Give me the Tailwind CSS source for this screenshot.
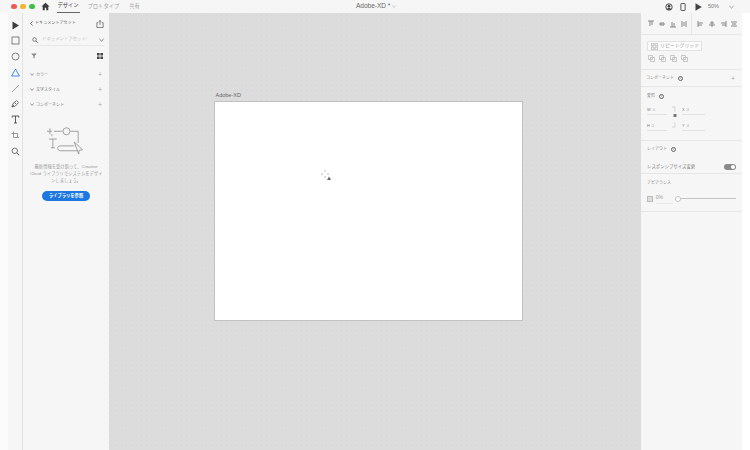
<!DOCTYPE html>
<html lang="ja">
<head>
  <meta charset="UTF-8" />
  <title>Adobe XD</title>
  <script src="https://cdn.jsdelivr.net/npm/@tailwindcss/browser@4"></script>
</head>
<body class="w-[750px] h-[450px] overflow-hidden whitespace-nowrap bg-white font-['Liberation_Sans','Noto_Sans_CJK_JP',sans-serif] text-[#7a7a7a]">
  <div class="flex flex-col w-[750px] h-[450px]">

    <!-- top bar -->
    <header class="relative flex items-center h-[13px] shrink-0 bg-[#f6f6f6]">
      <div class="flex items-center gap-[3.5px] ml-[11px]">
        <span class="w-[5.5px] h-[5.5px] rounded-full bg-[#ee5a52]"></span>
        <span class="w-[5.5px] h-[5.5px] rounded-full bg-[#f5b32f]"></span>
        <span class="w-[5.5px] h-[5.5px] rounded-full bg-[#3cc145]"></span>
      </div>
      <svg class="ml-[6px] w-[9px] h-[9px]" viewBox="0 0 10 10"><path d="M5 .8 .5 5h1.4v4.2h2.3V6.4h1.6v2.8h2.3V5h1.4z" fill="#3c3c3c"/></svg>
      <nav class="flex items-center h-full ml-[7px] text-[5.3px]">
        <span class="flex items-center h-full w-[23px] justify-center border-b border-[#666] text-[#444]">デザイン</span>
        <span class="ml-[8px] text-[#a0a0a0]">プロトタイプ</span>
        <span class="ml-[10px] text-[#a0a0a0]">共有</span>
      </nav>
      <div class="absolute left-[356px] top-[2px] flex items-center gap-[2px] text-[6.5px] leading-[8px] text-[#666]">
        Adobe-XD *
        <svg class="w-[4px] h-[3px]" viewBox="0 0 6 4"><path d="M.5 .8 3 3.2 5.5 .8" fill="none" stroke="#999" stroke-width=".8"/></svg>
      </div>
      <div class="ml-auto mr-[16px] flex items-center">
        <svg class="w-[8px] h-[8px]" viewBox="0 0 10 10"><circle cx="5" cy="5" r="4" fill="none" stroke="#444" stroke-width="1.2"/><circle cx="5" cy="4" r="1.7" fill="#444"/><path d="M2.3 8.5c.4-2 1.4-2.6 2.7-2.6s2.3.6 2.7 2.6z" fill="#444"/></svg>
        <svg class="ml-[7px] w-[6px] h-[8px]" viewBox="0 0 6 9"><rect x=".6" y=".6" width="4.8" height="7.8" rx=".6" fill="none" stroke="#444"/></svg>
        <svg class="ml-[9px] w-[7px] h-[8px]" viewBox="0 0 7 8"><path d="M.5 .3 6.8 4 .5 7.7z" fill="#444"/></svg>
        <span class="ml-[6px] w-[21px] text-[5.5px] text-[#777]">50%</span>
        <svg class="ml-[0px] w-[5px] h-[4px]" viewBox="0 0 6 4"><path d="M.5 .8 3 3.2 5.5 .8" fill="none" stroke="#777" stroke-width=".8"/></svg>
      </div>
    </header>

    <div class="flex flex-1 min-h-0">
      <div class="w-[8px] shrink-0 bg-[#fbfbfb]"></div>

      <!-- tools -->
      <aside class="w-[15px] shrink-0 bg-[#f6f6f6] border-r border-[#e2e2e2] flex flex-col items-center pt-[7.5px] gap-[6.8px]">
        <svg class="w-[9px] h-[9px]" viewBox="0 0 9 9"><path d="M1.500 .5 8 4.500 1.500 8.500z" fill="#3e3e3e"/></svg>
        <svg class="w-[9px] h-[9px]" viewBox="0 0 9 9"><rect x="1" y="1" width="7" height="7" fill="none" stroke="#666" stroke-width=".8"/></svg>
        <svg class="w-[9px] h-[9px]" viewBox="0 0 9 9"><circle cx="4.500" cy="4.500" r="3.500" fill="none" stroke="#666" stroke-width=".8"/></svg>
        <svg class="w-[9px] h-[9px]" viewBox="0 0 9 9"><path d="M4.500 1 8.400 8H.6z" fill="none" stroke="#1473e6" stroke-width=".8"/></svg>
        <svg class="w-[9px] h-[9px]" viewBox="0 0 9 9"><path d="M1 8 8 1" stroke="#777" stroke-width=".7"/></svg>
        <svg class="w-[9px] h-[9px]" viewBox="0 0 9 9"><path d="M1 8 2 4.500 5.500 1.500 7.500 3.500 4.500 7zM5 5 3.500 3.500M1 8l2-2" fill="none" stroke="#555" stroke-width=".8"/></svg>
        <svg class="w-[9px] h-[9px]" viewBox="0 0 9 9"><path d="M1.200 2.600V1h6.600v1.600M4.500 1v7M3 8h3" fill="none" stroke="#4a4a4a" stroke-width=".9"/></svg>
        <svg class="w-[9px] h-[9px]" viewBox="0 0 9 9"><path d="M2.500 .5v6H8M.5 2.500h6V6" fill="none" stroke="#777" stroke-width=".7"/></svg>
        <svg class="w-[9px] h-[9px]" viewBox="0 0 9 9"><circle cx="3.800" cy="3.800" r="2.700" fill="none" stroke="#555" stroke-width=".8"/><path d="M5.800 5.800 8.300 8.300" stroke="#555" stroke-width="1"/></svg>
      </aside>

      <!-- assets panel -->
      <aside class="w-[86px] shrink-0 bg-[#f6f6f6] flex flex-col pl-[7px] pr-[5px] text-[4px]">
        <div class="flex items-center h-[21px]">
          <svg class="w-[3px] h-[5px]" viewBox="0 0 3 5"><path d="M2.600 .4.600 2.500l2 2.100" fill="none" stroke="#555" stroke-width=".8"/></svg>
          <span class="ml-[2px] text-[#666] text-[4.100px]">ドキュメントアセット</span>
          <svg class="ml-auto w-[8px] h-[8px]" viewBox="0 0 9 9"><path d="M2.500 3H1v5.400h7V3H6.500M4.500 5.500V.6M3 2 4.500.6 6 2" fill="none" stroke="#555" stroke-width=".8"/></svg>
        </div>
        <div class="flex items-center h-[12px] border-b border-[#e8e8e8]">
          <svg class="ml-[2px] w-[6px] h-[6px]" viewBox="0 0 6 6"><circle cx="2.500" cy="2.500" r="1.800" fill="none" stroke="#555" stroke-width=".7"/><path d="M4 4 5.600 5.600" stroke="#555" stroke-width=".8"/></svg>
          <span class="ml-[4px] text-[#c2c2c2] text-[4.400px]">ドキュメントアセット!</span>
          <svg class="ml-auto mr-[0.5px] w-[5px] h-[4px]" viewBox="0 0 6 4"><path d="M.5 .8 3 3.200 5.500 .8" fill="none" stroke="#555" stroke-width=".9"/></svg>
        </div>
        <div class="flex items-center justify-between h-[10px] mt-[5px] pl-[1px] pr-[1.5px]">
          <svg class="w-[6px] h-[6px]" viewBox="0 0 6 6"><path d="M.3.600h5.400L3.600 3v2.600L2.400 5V3z" fill="#888"/></svg>
          <svg class="w-[6px] h-[6px]" viewBox="0 0 6 6"><path d="M0 0h2.600v2.600H0zM3.400 0H6v2.600H3.400zM0 3.400h2.600V6H0zM3.400 3.400H6V6H3.400z" fill="#444"/></svg>
        </div>
        <div class="flex flex-col mt-[6px] text-[#7a7a7a]">
          <div class="flex items-center h-[15px]">
            <svg class="w-[4px] h-[3px]" viewBox="0 0 6 4"><path d="M.5 .8 3 3.200 5.500 .8" fill="none" stroke="#555" stroke-width="1"/></svg>
            <span class="ml-[2px]">カラー</span>
            <span class="ml-auto mr-[2px] text-[7px] leading-none text-[#aaa]">+</span>
          </div>
          <div class="flex items-center h-[15px]">
            <svg class="w-[4px] h-[3px]" viewBox="0 0 6 4"><path d="M.5 .8 3 3.200 5.500 .8" fill="none" stroke="#555" stroke-width="1"/></svg>
            <span class="ml-[2px]">文字スタイル</span>
            <span class="ml-auto mr-[2px] text-[7px] leading-none text-[#aaa]">+</span>
          </div>
          <div class="flex items-center h-[15px]">
            <svg class="w-[4px] h-[3px]" viewBox="0 0 6 4"><path d="M.5 .8 3 3.200 5.500 .8" fill="none" stroke="#555" stroke-width="1"/></svg>
            <span class="ml-[2px]">コンポーネント</span>
            <span class="ml-auto mr-[2px] text-[7px] leading-none text-[#aaa]">+</span>
          </div>
        </div>
        <svg class="self-center mt-[14px] mr-[2px] w-[39px] h-[30px]" viewBox="0 0 40 30">
          <g fill="none" stroke="#8a8a8a" stroke-width=".8">
            <path d="M0 5h5M3 2v6M7 5h9M24 5h8v12M5 8v2"/>
            <circle cx="20" cy="5" r="3.600"/>
            <path d="M2 13h8M6 13v9M4 22h4M14 25h18M14 25c-2 0-3-1-3-2.500s1-2.500 3-2.500h14"/>
            <path d="M28 16l8.500 8-3.500 .5-.5 4z" fill="#f6f6f6"/>
          </g>
        </svg>
        <p class="mt-[7px] pr-[2px] text-center text-[4.300px] leading-[7px] text-[#9a9a9a]">最新情報を受け取って、Creative<br>Cloud ライブラリでシステムをデザイ<br>ンしましょう。</p>
        <div class="self-center mt-[7px] mr-[2px] flex items-center justify-center w-[48px] h-[10px] rounded-full bg-[#1c77e0] text-white text-[4.300px] font-bold">ライブラリを参照</div>
      </aside>

      <!-- canvas -->
      <main class="relative flex-1 min-w-0 bg-[#dddcdd] bg-[radial-gradient(#d6d5d6_0.7px,transparent_0.8px)] bg-[length:5px_5px] pl-[105px] pt-[78.5px]">
        <div class="ml-[1.5px] text-[5.500px] leading-[7px] text-[#666]">Adobe-XD</div>
        <div class="relative mt-[2.500px] w-[309px] h-[220px] bg-white border border-[#c2c2c2]">
          <svg class="absolute left-[106px] top-[68px] w-[11px] h-[11px]" viewBox="0 0 11 11"><path d="M4 0v2M4 6v2M0 4h2M6 4h2" stroke="#aaa" stroke-width=".8"/><path d="M8 6.500 10 10H6z" fill="#666"/></svg>
        </div>
      </main>

      <!-- properties panel -->
      <aside class="w-[101px] shrink-0 bg-[#f6f6f6] text-[4px] text-[#888] flex flex-col">
        <div class="flex items-center h-[22px] border-b border-[#e6e6e6] pl-[6px] gap-[3px]">
          <svg class="w-[8px] h-[8px]" viewBox="0 0 8 8"><path d="M1 1h6M3 1v5M5 1v4" stroke="#888" stroke-width="1"/></svg>
          <svg class="w-[8px] h-[8px]" viewBox="0 0 8 8"><path d="M1 4h6M3 2v4M5 2v4" stroke="#888" stroke-width="1"/></svg>
          <svg class="w-[8px] h-[8px]" viewBox="0 0 8 8"><path d="M1 7h6M3 2v5M5 3v4" stroke="#888" stroke-width="1"/></svg>
          <svg class="w-[8px] h-[8px]" viewBox="0 0 8 8"><path d="M2 1v6M6 1v6M4 2v4" stroke="#888" stroke-width="1"/></svg>
          <div class="w-px h-[21px] bg-[#e6e6e6]"></div>
          <svg class="ml-[2px] w-[8px] h-[8px]" viewBox="0 0 8 8"><path d="M1 1v6M1 3h5M1 5h4" stroke="#888" stroke-width="1"/></svg>
          <svg class="w-[8px] h-[8px]" viewBox="0 0 8 8"><path d="M4 1v6M2 3h4M1 5h6" stroke="#888" stroke-width="1"/></svg>
          <svg class="w-[8px] h-[8px]" viewBox="0 0 8 8"><path d="M7 1v6M2 3h5M3 5h4" stroke="#888" stroke-width="1"/></svg>
          <svg class="w-[8px] h-[8px]" viewBox="0 0 8 8"><path d="M1 2h6M1 6h6M2 4h4" stroke="#888" stroke-width="1"/></svg>
        </div>
        <div class="h-[35px] border-b border-[#e6e6e6] px-[6px] pt-[6px]">
          <div class="flex items-center w-[55px] h-[10px] border border-[#e2e2e2] bg-white/50 pl-[3px]">
            <svg class="w-[7px] h-[7px]" viewBox="0 0 6 6"><path d="M.3.300h2.200v2.200H.3zM3.500.300h2.200v2.200H3.500zM.3 3.500h2.200v2.200H.3zM3.500 3.500h2.200v2.200H3.500z" fill="none" stroke="#aaa" stroke-width=".6"/></svg>
            <span class="ml-[2px] text-[4.900px] text-[#a6a6a6]">リピートグリッド</span>
          </div>
          <div class="flex items-center gap-[4px] mt-[4px] ml-[1px]">
            <svg class="w-[7px] h-[7px]" viewBox="0 0 7 7"><path d="M.5.500h4v4h-4zM2.500 2.500h4v4h-4z" fill="none" stroke="#b4b4b4" stroke-width=".7"/></svg>
            <svg class="w-[7px] h-[7px]" viewBox="0 0 7 7"><path d="M.5.500h4v4h-4zM2.500 2.500h4v4h-4z" fill="none" stroke="#b4b4b4" stroke-width=".7"/></svg>
            <svg class="w-[7px] h-[7px]" viewBox="0 0 7 7"><path d="M.5.500h4v4h-4zM2.500 2.500h4v4h-4z" fill="none" stroke="#b4b4b4" stroke-width=".7"/></svg>
            <svg class="w-[7px] h-[7px]" viewBox="0 0 7 7"><path d="M.5.500h4v4h-4zM2.500 2.500h4v4h-4z" fill="none" stroke="#b4b4b4" stroke-width=".7"/></svg>
          </div>
        </div>
        <div class="flex items-center h-[17px] border-b border-[#e6e6e6] pl-[5px] pr-[7px]">
          <span>コンポーネント</span>
          <span class="ml-[4px] flex items-center justify-center w-[5px] h-[5px] rounded-full border-[0.7px] border-[#666] text-[4px] leading-none text-[#666]">i</span>
          <span class="ml-auto text-[7px] leading-none text-[#aaa]">+</span>
        </div>
        <div class="h-[54px] border-b border-[#e6e6e6] px-[6px] pt-[5px]">
          <div class="flex items-center h-[8px]">
            <span>変形</span>
            <span class="ml-[4px] flex items-center justify-center w-[5px] h-[5px] rounded-full border-[0.7px] border-[#666] text-[4px] leading-none text-[#666]">i</span>
          </div>
          <div class="grid grid-cols-[20px_15px_23px] gap-y-[3.500px] mt-[2.500px] text-[#aaa]">
            <div class="h-[12.500px] pt-[5px] border-b border-[#e2e2e2] text-[3.800px]"><span class="text-[#777]">W</span>&nbsp;&nbsp;0</div>
            <svg class="row-span-2 w-[15px] h-[29px]" viewBox="0 0 15 29"><path d="M5 4h3v5M8 19v5H5" fill="none" stroke="#c4c4c4" stroke-width=".6"/><rect x="6.500" y="11" width="3" height="3" fill="#777"/></svg>
            <div class="h-[12.500px] pt-[5px] border-b border-[#e2e2e2] text-[3.800px]"><span class="text-[#777]">X</span>&nbsp;&nbsp;0</div>
            <div class="h-[12.500px] pt-[5px] border-b border-[#e2e2e2] text-[3.800px]"><span class="text-[#777]">H</span>&nbsp;&nbsp;0</div>
            <div class="h-[12.500px] pt-[5px] border-b border-[#e2e2e2] text-[3.800px]"><span class="text-[#777]">Y</span>&nbsp;&nbsp;0</div>
          </div>
        </div>
        <div class="h-[33px] border-b border-[#e6e6e6] px-[6px] pt-[5px]">
          <div class="flex items-center">
            <span>レイアウト</span>
            <span class="ml-[4px] flex items-center justify-center w-[5px] h-[5px] rounded-full border-[0.7px] border-[#666] text-[4px] leading-none text-[#666]">i</span>
          </div>
          <div class="flex items-center mt-[12px] text-[4.400px]">
            <span class="text-[#777]">レスポンシブサイズ変更</span>
            <span class="ml-auto mr-[0px] flex items-center justify-end w-[12px] h-[6px] pr-[1px] rounded-full bg-[#8a8a8a]"><span class="w-[4px] h-[4px] rounded-full bg-white"></span></span>
          </div>
        </div>
        <div class="h-[38px] border-b border-[#e6e6e6] px-[6px] pt-[6px]">
          <div>アピアランス</div>
          <div class="flex items-center mt-[8px]">
            <span class="w-[6px] h-[6px] bg-[#dedede] border border-[#bbb]"></span>
            <span class="ml-[3px] w-[19px] pb-[1px] text-[5px] text-[#999] border-b border-[#e6e6e6]">0%</span>
            <span class="ml-[2px] w-[6px] h-[6px] rounded-full bg-white border border-[#c4c4c4] z-10"></span>
            <span class="w-[59px] h-px bg-[#c4c4c4]"></span>
          </div>
        </div>
      </aside>

      <div class="w-[8px] shrink-0 bg-white"></div>
    </div>
  </div>
</body>
</html>
